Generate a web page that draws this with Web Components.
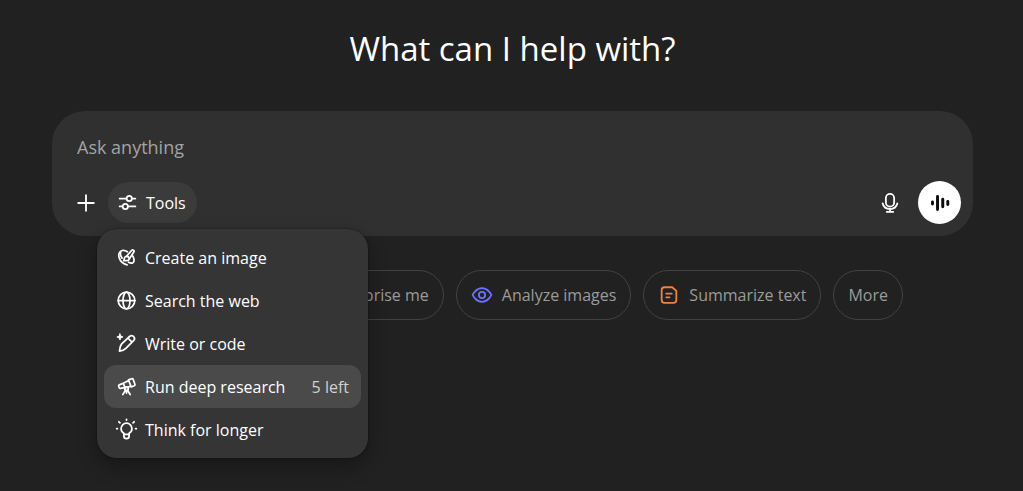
<!DOCTYPE html>
<html lang="en">
<head>
<meta charset="utf-8">
<title>Chat</title>
<style>
  html, body {
    margin: 0;
    min-height: 100%;
  }
  body {
    background: #212121;
    color: #fff;
    font-family: "Segoe UI", "Open Sans", sans-serif;
    font-size: 16px;
    line-height: 24px;
  }
</style>
</head>
<body>
<chat-home></chat-home>

<script>
const icons = {
  plus: '<path d="M12 3.500v17M3.500 12h17"/>',
  sliders: '<path d="M3 7.500h7.500M17 7.500h4M3 16.500h3M13 16.500h8"/><circle cx="14" cy="7.500" r="3"/><circle cx="9.500" cy="16.500" r="3"/>',
  mic: '<rect x="7.500" y="2" width="9" height="14" rx="4.500"/><path d="M4 12.500c1 4 4 6 8 6s7-2 8-6M12 18.500v3M8.500 21.700h7"/>',
  voice: '<path stroke-width="3.200" d="M3.800 10.800v2.400M9.300 4.800v14.400M15 7.800v8.400M20.500 10.300v3.400"/>',
  palette: '<path d="M13 5.400C11 4 9.200 3.400 7 4 3.400 5 2.600 8.800 3.600 12.200c1.200 4 4.900 6.900 9 8.300"/><path d="M5.400 5.500c-.8 2.600-.2 5 1.500 7.200"/><path d="m12 10.700 6-7c1.100-1.200 3.300.2 2.500 1.800l-5.200 8"/><path d="M15.300 13.500c-.5 1.500-1.800 2.200-3.200 2.200H8.700c.8-1 .6-1.700.8-2.700.4-1.700 1.500-2.400 2.700-2.300 1.700.1 2.800 1.300 3.100 2.800Z"/><path d="M19 10.200c1.700 2.400 2.500 6.300.3 7.700-1.500.9-3.500.3-5-.6"/>',
  globe: '<circle cx="12" cy="12" r="9.500"/><ellipse cx="12" cy="12" rx="4" ry="9.500"/><path d="M2.500 12h19"/>',
  pencil: '<path d="m6.500 12.500 9-8.500a3.200 3.200 0 0 1 4.600 4.600l-8.800 9c-2 2-4.300 2.900-7.300 3 .1-3 .7-6 2.500-8.100ZM13.800 6l4.500 4.500"/><path fill="currentColor" stroke-width="1" d="M4.500 1 5.500 3.500 8 4.500 5.500 5.500 4.500 8 3.500 5.500 1 4.500 3.500 3.500Z"/>',
  telescope: '<path d="m14.300 4.500 3.600-1.300c.8-.3 1.400 0 1.700.7l2 5.500c.3.800 0 1.400-.7 1.700l-3.600 1.300M14.300 4.500l3 7.900M14.500 5.200 8.300 8.300l2 5.200 6.700-1.800M8.300 8.300l-4.500 1.800c-.8.300-1 .9-.7 1.600l.6 1.600c.3.800.9 1 1.600.8l5-1.200"/><circle cx="12" cy="14.500" r="2"/><path d="m10.800 16.200-3 5M13.200 16.200l3 5M12 17v2.500"/>',
  bulb: '<path d="M9 17.500v-1.200c-2-1.200-3.200-3-3.200-5.300a6.200 6.200 0 0 1 12.400 0c0 2.300-1.200 4.100-3.200 5.300v1.200M9 17.500h6M9 17.500v1.800a3 3 0 0 0 6 0v-1.800"/><path d="M12 .4v.8M3.300 3.200l1.200 1.200M20.700 3.200l-1.200 1.200M.8 11h.8M22.400 11h.8"/>',
  eye: '<path d="M1.800 12S5 4.500 12 4.500 22.200 12 22.200 12 19 19.500 12 19.500 1.800 12 1.800 12Z"/><circle cx="12" cy="12" r="3.400"/>',
  note: '<path d="M7 3.500h8.500L20 7.500v10a3 3 0 0 1-3 3H7a3 3 0 0 1-3-3v-11a3 3 0 0 1 3-3ZM9 10.500h6M9 14.500h3.500"/>'
};

class AppIcon extends HTMLElement {
  constructor() {
    super();
    this.attachShadow({ mode: 'open' });
  }

  connectedCallback() {
    this.shadowRoot.innerHTML = `
      <style>
        :host {
          display: inline-flex;
          flex: none;
          width: var(--icon-size, 22px);
          height: var(--icon-size, 22px);
        }
        svg {
          width: 100%;
          height: 100%;
          overflow: visible;
        }
      </style>
      <svg viewBox="0 0 24 24" fill="none" stroke="currentColor" stroke-width="2"
        stroke-linecap="round" stroke-linejoin="round" aria-hidden="true">${icons[this.getAttribute('name')]}</svg>
    `;
  }
}
customElements.define('app-icon', AppIcon);

const menuItemTemplate = document.createElement('template');
menuItemTemplate.innerHTML = `
<style>
  :host {
    display: block;
  }
  button {
    display: flex;
    align-items: center;
    gap: 8px;
    width: 100%;
    height: 43px;
    padding: 0 12px;
    border: 0;
    border-radius: 12px;
    background: none;
    color: #fff;
    font: inherit;
    text-align: left;
    cursor: pointer;
  }
  :host([active]) button, button:hover {
    background: #4a4a4a;
  }
  .label {
    flex: 1;
    white-space: nowrap;
  }
  ::slotted([slot="note"]) {
    color: #d0d0d0;
  }
</style>
<button type="button" role="menuitem">
  <slot name="icon"></slot>
  <span class="label"><slot></slot></span>
  <slot name="note"></slot>
</button>
`;

class MenuItem extends HTMLElement {
  constructor() {
    super();
    this.attachShadow({ mode: 'open' });
    this.shadowRoot.appendChild(menuItemTemplate.content.cloneNode(true));
  }
}
customElements.define('menu-item', MenuItem);

const toolsMenuTemplate = document.createElement('template');
toolsMenuTemplate.innerHTML = `
<style>
  :host {
    display: block;
    box-sizing: border-box;
    width: 271px;
    padding: 7px;
    border-radius: 20px;
    background: #353535;
    box-shadow: 0 8px 20px rgba(0, 0, 0, .32), 0 0 2px rgba(0, 0, 0, .5);
    --icon-size: 21px;
  }
</style>
<div role="menu" aria-label="Tools">
  <menu-item><app-icon slot="icon" name="palette"></app-icon>Create an image</menu-item>
  <menu-item><app-icon slot="icon" name="globe"></app-icon>Search the web</menu-item>
  <menu-item><app-icon slot="icon" name="pencil"></app-icon>Write or code</menu-item>
  <menu-item active><app-icon slot="icon" name="telescope"></app-icon>Run deep research<span slot="note">5 left</span></menu-item>
  <menu-item><app-icon slot="icon" name="bulb"></app-icon>Think for longer</menu-item>
</div>
`;

class ToolsMenu extends HTMLElement {
  constructor() {
    super();
    this.attachShadow({ mode: 'open' });
    this.shadowRoot.appendChild(toolsMenuTemplate.content.cloneNode(true));
  }
}
customElements.define('tools-menu', ToolsMenu);

const composerTemplate = document.createElement('template');
composerTemplate.innerHTML = `
<style>
  :host {
    display: block;
    padding: 22px 12px 12px;
    border-radius: 33px;
    background: #303030;
  }
  input {
    display: block;
    box-sizing: border-box;
    width: 100%;
    height: 28px;
    padding: 0 13px;
    border: 0;
    outline: 0;
    background: none;
    color: #fff;
    font: inherit;
    font-size: 18px;
  }
  input::placeholder {
    color: #a3a3a3;
    opacity: 1;
  }
  .bar {
    display: flex;
    align-items: center;
    gap: 1px;
    margin-top: 20px;
  }
  button {
    display: flex;
    align-items: center;
    justify-content: center;
    width: 43px;
    height: 43px;
    padding: 0;
    border: 0;
    border-radius: 22px;
    background: none;
    color: #fff;
    font: inherit;
    cursor: pointer;
  }
  .tools {
    position: relative;
  }
  .tools button {
    gap: 8px;
    width: auto;
    height: 41px;
    padding: 0 11px 0 9px;
    background: #3b3b3b;
    --icon-size: 21px;
  }
  tools-menu {
    position: absolute;
    top: 47px;
    left: -11px;
    z-index: 1;
  }
  .end {
    display: flex;
    gap: 7px;
    margin-left: auto;
  }
  .voice {
    background: #fff;
    color: #0d0d0d;
  }
</style>
<input type="text" placeholder="Ask anything" aria-label="Ask anything">
<div class="bar">
  <button type="button" aria-label="Add"><app-icon name="plus"></app-icon></button>
  <div class="tools">
    <button type="button" aria-haspopup="menu" aria-expanded="true"><app-icon name="sliders"></app-icon>Tools</button>
    <tools-menu></tools-menu>
  </div>
  <div class="end">
    <button type="button" aria-label="Dictate"><app-icon name="mic"></app-icon></button>
    <button type="button" class="voice" aria-label="Voice mode"><app-icon name="voice"></app-icon></button>
  </div>
</div>
`;

class ChatComposer extends HTMLElement {
  constructor() {
    super();
    this.attachShadow({ mode: 'open' });
    this.shadowRoot.appendChild(composerTemplate.content.cloneNode(true));
  }
}
customElements.define('chat-composer', ChatComposer);

const chipTemplate = document.createElement('template');
chipTemplate.innerHTML = `
<style>
  :host {
    display: block;
  }
  button {
    display: flex;
    align-items: center;
    gap: 9px;
    height: 50px;
    padding: 0 14px;
    border: 1px solid #424242;
    border-radius: 25px;
    background: none;
    color: #9b9b9b;
    font: inherit;
    white-space: nowrap;
    cursor: pointer;
  }
</style>
<button type="button"><slot name="icon"></slot><span><slot></slot></span></button>
`;

class SuggestionChip extends HTMLElement {
  constructor() {
    super();
    this.attachShadow({ mode: 'open' });
    this.shadowRoot.appendChild(chipTemplate.content.cloneNode(true));
  }
}
customElements.define('suggestion-chip', SuggestionChip);

const homeTemplate = document.createElement('template');
homeTemplate.innerHTML = `
<style>
  :host {
    display: block;
    box-sizing: border-box;
    min-height: 100vh;
    padding: 27px 50px 0 52px;
  }
  h1 {
    margin: 0 0 40px;
    font-size: 33px;
    font-weight: 400;
    line-height: 44px;
    text-align: center;
  }
  .chips {
    display: flex;
    justify-content: flex-end;
    gap: 12px;
    margin-top: 34px;
    padding-right: 70px;
  }
  .eye {
    color: #6c71ff;
  }
  .note {
    color: #ea8444;
  }
</style>
<main>
  <h1>What can I help with?</h1>
  <chat-composer></chat-composer>
  <div class="chips">
    <suggestion-chip>Surprise me</suggestion-chip>
    <suggestion-chip><app-icon slot="icon" class="eye" name="eye"></app-icon>Analyze images</suggestion-chip>
    <suggestion-chip><app-icon slot="icon" class="note" name="note"></app-icon>Summarize text</suggestion-chip>
    <suggestion-chip>More</suggestion-chip>
  </div>
</main>
`;

class ChatHome extends HTMLElement {
  constructor() {
    super();
    this.attachShadow({ mode: 'open' });
    this.shadowRoot.appendChild(homeTemplate.content.cloneNode(true));
  }
}
customElements.define('chat-home', ChatHome);
</script>
</body>
</html>
